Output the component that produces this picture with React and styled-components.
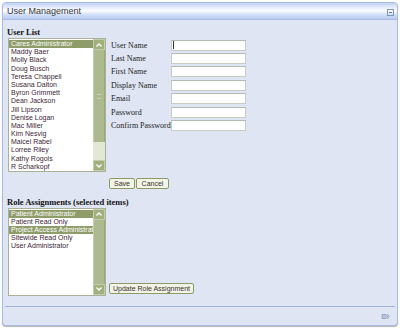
import React from 'react';
import styled, { createGlobalStyle } from 'styled-components';

const GlobalStyle = createGlobalStyle`
  html, body {
    margin: 0;
    padding: 0;
    background: #fff;
  }
  body {
    font-family: "Liberation Sans", Arial, sans-serif;
  }
`;

const Panel = styled.div`
  box-sizing: border-box;
  margin: 2px;
  width: 396px;
  height: 324px;
  border: 1px solid #a9bbe0;
  border-radius: 4px;
  background: #dfe5f2;
  display: flex;
  flex-direction: column;
  overflow: hidden;
  box-shadow: 0 1px 1px #b4b4b4;
`;

const Header = styled.div`
  height: 16px;
  border-bottom: 1px solid #aabbe2;
  background: linear-gradient(#c4d2f3 0%, #f2f6ff 40%, #fbfdff 50%, #d6e2fa 70%, #b9cbf2 100%);
  display: flex;
  align-items: center;
  justify-content: space-between;
  padding: 0 3px 0 4px;
`;

const Title = styled.span`
  font-size: 9px;
  color: #3a3a3a;
  line-height: 16px;
`;

const CollapseBox = styled.span`
  box-sizing: border-box;
  width: 7px;
  height: 7px;
  border: 1px solid #8494b4;
  display: flex;
  align-items: center;
  justify-content: center;
  margin-top: 3px;

  &::after {
    content: '';
    width: 3px;
    height: 1px;
    background: #6a7a9a;
  }
`;

const Body = styled.div`
  flex: 1;
  padding: 7px 0 0 5px;
  display: flex;
  flex-direction: column;
`;

const Heading = styled.div`
  font-family: "Liberation Serif", "Times New Roman", serif;
  font-weight: bold;
  font-size: 8.5px;
  line-height: 11px;
  color: #111;
  margin: ${ props => props.$top || 0 }px 0 0 -1px;
`;

const Row = styled.div`
  display: flex;
  align-items: ${ props => props.$align || 'flex-start' };
  gap: ${ props => props.$gap || 5 }px;
`;

const ListBox = styled.div`
  box-sizing: border-box;
  width: 98px;
  height: ${ props => props.$h }px;
  border: 1px solid #a9b196;
  background: #fff;
  display: flex;
`;

const Items = styled.div`
  flex: 1;
  min-width: 0;
  padding-top: 1px;
  overflow: hidden;
`;

const Item = styled.div`
  font-size: 7px;
  line-height: 8.2px;
  height: 8.2px;
  padding-left: 2px;
  white-space: nowrap;
  overflow: hidden;
  color: ${ props => props.$selected ? '#fff' : '#3e1f38' };
  background: ${ props => props.$selected ? '#8e9c6a' : 'transparent' };
`;

const Scrollbar = styled.div`
  width: 12px;
  display: flex;
  flex-direction: column;
  background: ${ props => props.$track };
`;

const ScrollButton = styled.div`
  box-sizing: border-box;
  height: 11px;
  background: #a2b07e;
  border: 1px solid #c3cbb0;
  display: flex;
  align-items: center;
  justify-content: center;
`;

const Thumb = styled.div`
  flex: ${ props => props.$fill ? 1 : 'none' };
  height: ${ props => props.$fill ? 'auto' : `${ props.$h }px` };
  background: #adba8f;
  border-left: 1px solid #c4cdb0;
  border-right: 1px solid #9aa878;
  display: flex;
  align-items: center;
  justify-content: center;

  &::after {
    content: '';
    width: 4px;
    height: 3px;
    border-top: 1px solid #c9d2b4;
    border-bottom: 1px solid #c9d2b4;
    display: ${ props => props.$fill ? 'none' : 'block' };
  }
`;

const Track = styled.div`
  flex: 1;
`;

const Form = styled.div`
  display: grid;
  grid-template-columns: 60px 75px;
  grid-auto-rows: 11px;
  row-gap: 2.4px;
  margin-top: 1.7px;
  align-items: center;
`;

const Label = styled.label`
  font-family: "Liberation Serif", "Times New Roman", serif;
  font-size: 8px;
  color: #222;
  white-space: nowrap;
`;

const Field = styled.div`
  box-sizing: border-box;
  height: 11px;
  background: #fff;
  border: 1px solid #c7cec0;
  border-top-color: #b4bbb0;
  display: flex;
  align-items: center;
  padding-left: 1px;

  &::before {
    content: '';
    display: ${ props => props.$focused ? 'block' : 'none' };
    width: 1px;
    height: 8px;
    background: #333;
  }
`;

const Actions = styled.div`
  display: flex;
  gap: 1px;
  margin: 5.5px 0 0 101px;
`;

const Button = styled.button`
  box-sizing: border-box;
  width: ${ props => props.$w }px;
  height: 11px;
  padding: 0;
  font-family: "Liberation Sans", Arial, sans-serif;
  font-size: 7px;
  line-height: 9px;
  color: #333;
  background: #f4f4e6;
  border: 1px solid #8c9a6a;
  border-radius: 2px;
  margin-bottom: ${ props => props.$mb || 0 }px;
`;

const Footer = styled.div`
  margin: 0 2px;
  height: 18px;
  border-top: 1px solid #9fb2dc;
  display: flex;
  align-items: center;
  justify-content: flex-end;
  padding-right: 4px;
`;

const Chevron = ( { down } ) => (
  <svg width="6" height="4" viewBox="0 0 6 4">
    <path d={ down ? 'M0.5 0.5 L3 3 L5.5 0.5' : 'M0.5 3.5 L3 1 L5.5 3.5' } fill="none" stroke="#fff" strokeWidth="1.3" />
  </svg>
);

const users = [
  'Cares Administrator', 'Maddy Baer', 'Molly Black', 'Doug Busch', 'Teresa Chappell',
  'Susana Dalton', 'Byron Grimmett', 'Dean Jackson', 'Jill Lipson', 'Denise Logan',
  'Mac Miller', 'Kim Nesvig', 'Maicel Rabel', 'Lorree Riley', 'Kathy Rogols', 'R Scharkopf',
];

const roles = [
  { name: 'Patient Administrator', selected: true },
  { name: 'Patient Read Only' },
  { name: 'Project Access Administrator', selected: true },
  { name: 'Sitewide Read Only' },
  { name: 'User Administrator' },
];

const fields = [ 'User Name', 'Last Name', 'First Name', 'Display Name', 'Email', 'Password', 'Confirm Password' ];

export default function App() {
  return (
    <>
      <GlobalStyle />
      <Panel>
        <Header>
          <Title>User Management</Title>
          <CollapseBox />
        </Header>
        <Body>
          <Heading>User List</Heading>
          <Row>
            <ListBox $h={ 134 }>
              <Items>
                { users.map( ( u, i ) => (
                  <Item key={ u } $selected={ i === 0 }>{ u }</Item>
                ) ) }
              </Items>
              <Scrollbar $track="#e3e8d6">
                <ScrollButton><Chevron /></ScrollButton>
                <Thumb $h={ 92 } />
                <Track />
                <ScrollButton><Chevron down /></ScrollButton>
              </Scrollbar>
            </ListBox>
            <Form>
              { fields.map( ( f, i ) => (
                <React.Fragment key={ f }>
                  <Label>{ f }</Label>
                  <Field $focused={ i === 0 } />
                </React.Fragment>
              ) ) }
            </Form>
          </Row>
          <Actions>
            <Button $w={ 26 }>Save</Button>
            <Button $w={ 33 }>Cancel</Button>
          </Actions>
          <Heading $top={ 8 }>Role Assignments (selected items)</Heading>
          <Row $align="flex-end" $gap={ 3 }>
            <ListBox $h={ 88 }>
              <Items>
                { roles.map( ( r ) => (
                  <Item key={ r.name } $selected={ r.selected }>{ r.name }</Item>
                ) ) }
              </Items>
              <Scrollbar $track="#c9d1b6">
                <ScrollButton><Chevron /></ScrollButton>
                <Thumb $fill />
                <ScrollButton><Chevron down /></ScrollButton>
              </Scrollbar>
            </ListBox>
            <Button $w={ 85 } $mb={ 2 }>Update Role Assignment</Button>
          </Row>
        </Body>
        <Footer>
          <svg width="10" height="7" viewBox="0 0 10 7">
            <path d="M1 1.5 H5 L7 3.5 L5 5.5 H1 Z" fill="#b8c4dc" stroke="#8f9fc0" strokeWidth="0.8" />
            <path d="M6 1 L8.5 3.5 L6 6" fill="none" stroke="#8f9fc0" strokeWidth="0.8" />
          </svg>
        </Footer>
      </Panel>
    </>
  );
}
